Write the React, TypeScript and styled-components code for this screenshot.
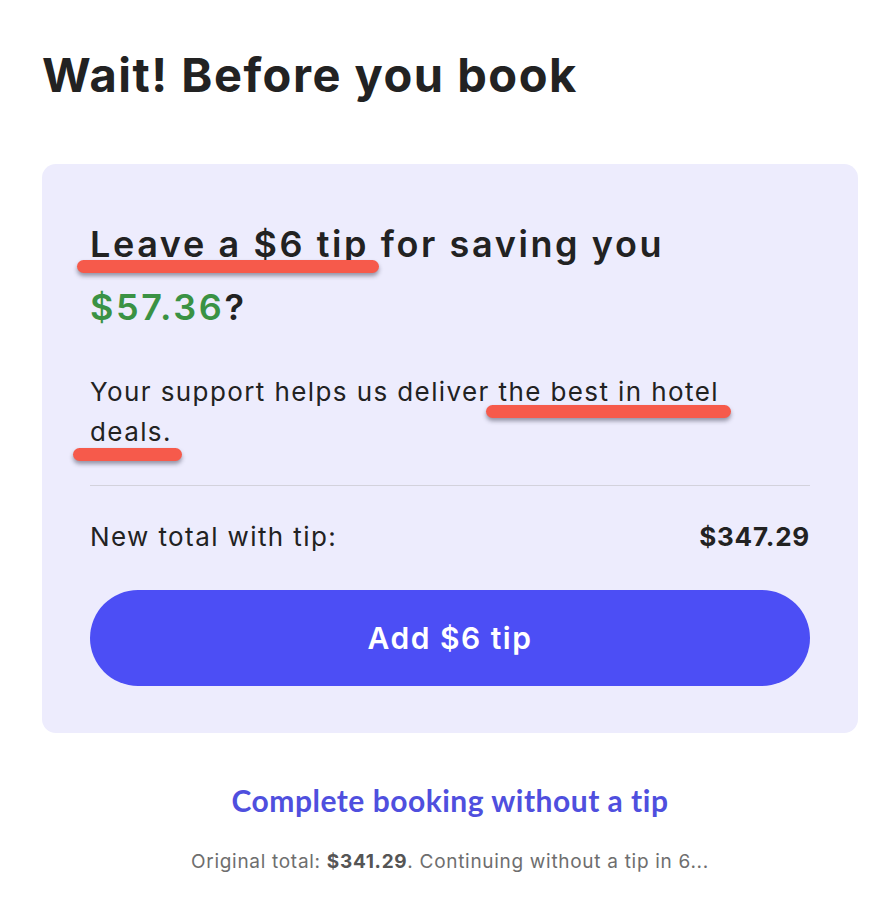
import React from "react";
import styled, { createGlobalStyle } from "styled-components";

const Global = createGlobalStyle`
  html, body { margin: 0; padding: 0; background: #ffffff; }
  body { font-family: "Inter", "Noto Sans", sans-serif; color: #222222; }
`;

const Page = styled.div`
  width: 816px;
  padding: 46px 0 40px 42px;
  display: flex;
  flex-direction: column;
`;

const Title = styled.h1`
  margin: 0 0 61px 0;
  font-size: 47px;
  line-height: 57px;
  font-weight: 700;
  letter-spacing: 1.5px;
  color: #222222;
`;

const Card = styled.section`
  background: #edecfd;
  border-radius: 14px;
  padding: 49px 48px 47px 48px;
  display: flex;
  flex-direction: column;
`;

const Headline = styled.h2`
  margin: 0;
  font-size: 36px;
  line-height: 63px;
  font-weight: 600;
  letter-spacing: 2.6px;
  color: #222222;
`;

const Green = styled.span`
  color: #3a9244;
`;

const Mark = styled.span<{ $l: number; $r: number; $t: number }>`
  position: relative;
  &::after {
    content: "";
    position: absolute;
    left: ${(p) => p.$l}px;
    right: ${(p) => p.$r}px;
    top: ${(p) => p.$t}px;
    height: 13px;
    border-radius: 7px;
    background: #f65a4b;
    box-shadow: 0 3px 4px rgba(40, 40, 60, 0.45);
  }
`;

const Body = styled.p`
  margin: 33px 0 0 0;
  max-width: 680px;
  font-size: 26px;
  line-height: 40px;
  font-weight: 400;
  letter-spacing: 1.4px;
  color: #222222;
`;

const Divider = styled.hr`
  margin: 33px 0 0 0;
  border: 0;
  border-top: 1px solid #d3d2dc;
`;

const TotalRow = styled.div`
  display: flex;
  justify-content: space-between;
  align-items: center;
  margin-top: 35px;
  font-size: 26px;
  line-height: 32px;
  letter-spacing: 1.4px;
`;

const TotalValue = styled.span`
  font-weight: 700;
  letter-spacing: 0.8px;
`;

const TipButton = styled.button`
  margin-top: 37px;
  height: 96px;
  border: 0;
  border-radius: 48px;
  background: #4c4ef5;
  color: #ffffff;
  font-family: "Inter", "Noto Sans", sans-serif;
  font-size: 30px;
  font-weight: 600;
  letter-spacing: 1.5px;
  cursor: pointer;
`;

const SkipLink = styled.a`
  margin-top: 49px;
  text-align: center;
  font-family: "Lato", sans-serif;
  font-weight: 700;
  font-size: 30px;
  line-height: 36px;
  letter-spacing: 0.5px;
  color: #4f4fde;
  text-decoration: none;
`;

const Note = styled.p`
  margin: 32px 0 0 0;
  text-align: center;
  font-size: 19px;
  line-height: 24px;
  letter-spacing: 0.7px;
  color: #6e6e6e;
  b { font-weight: 700; color: #555555; }
`;

export default function App() {
  return (
    <>
      <Global />
      <Page>
        <Title>Wait! Before you book</Title>
        <Card>
          <Headline>
            <Mark $l={-13} $r={-10} $t={38}>Leave a $6 tip</Mark> for saving you{" "}
            <Green>$57.36</Green>?
          </Headline>
          <Body>
            Your support helps us deliver{" "}
            <Mark $l={-13} $r={-12} $t={29}>the best in hotel</Mark>{" "}
            <Mark $l={-17} $r={-10} $t={32}>deals.</Mark>
          </Body>
          <Divider />
          <TotalRow>
            <span>New total with tip:</span>
            <TotalValue>$347.29</TotalValue>
          </TotalRow>
          <TipButton>Add $6 tip</TipButton>
        </Card>
        <SkipLink href="#">Complete booking without a tip</SkipLink>
        <Note>
          Original total: <b>$341.29</b>. Continuing without a tip in 6...
        </Note>
      </Page>
    </>
  );
}
